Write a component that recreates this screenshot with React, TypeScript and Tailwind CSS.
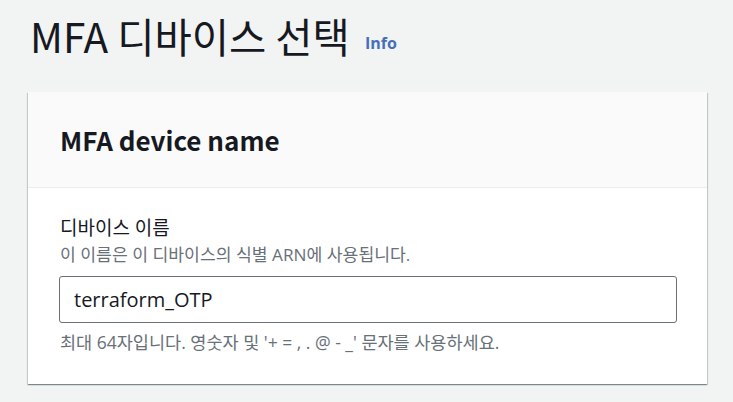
import React from "react";

export default function App() {
  const font = { fontFamily: '"Noto Sans CJK KR", "Noto Sans", sans-serif' };
  const body = { fontFamily: '"Open Sans", "Noto Sans CJK KR", sans-serif' };
  return (
    <div className="min-h-[402px] w-full bg-[#f2f3f3] pl-[28px] pr-[26px] pt-[8px]" style={font}>
      <div className="flex items-end gap-[15px] pl-[2px]">
        <h1 className="text-[40.5px] leading-[56px] font-normal text-[#16191f]">MFA 디바이스 선택</h1>
        <span className="mb-[9px] text-[16px] font-bold text-[#4470b8]" style={body}>Info</span>
      </div>
      <div className="mt-[28px] bg-white shadow-[0_1px_1px_0_rgba(0,28,36,0.3),1px_1px_1px_0_rgba(0,28,36,0.15),-1px_1px_1px_0_rgba(0,28,36,0.15)]">
        <div className="flex h-[96px] items-center border-b border-[#eaeded] bg-[#fafafa] px-[32px]">
          <h2 className="text-[26px] font-bold text-[#16191f]">MFA device name</h2>
        </div>
        <div className="pl-[31px] pr-[30px] pb-[30px] pt-[27px]" style={body}>
          <div className="pl-[1px] text-[19px] leading-[26px] text-[#16191f]">디바이스 이름</div>
          <div className="mt-[2px] pl-[1px] text-[17.2px] leading-[24px] text-[#687078]">이 이름은 이 디바이스의 식별 ARN에 사용됩니다.</div>
          <div className="mt-[9px] flex h-[47px] items-center rounded-[3px] border border-[#687078] bg-white px-[14px] text-[20px] text-[#16191f]">
            terraform_OTP
          </div>
          <div className="mt-[7px] pl-[1px] text-[17.5px] leading-[24px] text-[#687078]">
            최대 64자입니다. 영숫자 및 '+ = , . @ - _' 문자를 사용하세요.
          </div>
        </div>
      </div>
    </div>
  );
}
